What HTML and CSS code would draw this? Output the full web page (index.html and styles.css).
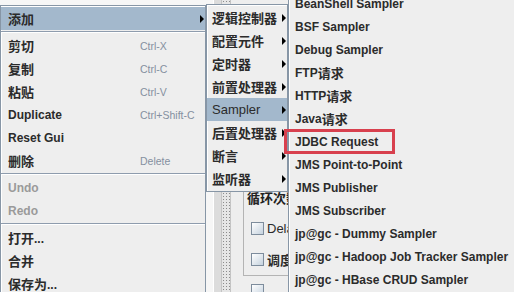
FILE: index.html
```html
<!DOCTYPE html>
<html lang="zh-CN">
<head>
    <meta charset="UTF-8">
    <title>JMeter - 添加 Sampler</title>
    <link rel="stylesheet" href="styles.css">
</head>
<body>
    <div class="window">
        <div class="topbar">
            <div class="tb-grey"></div>
            <div class="tb-white"></div>
            <div class="tb-tool"></div>
        </div>
        <div class="workspace">
            <div class="tree"></div>
            <div class="gutter"></div>
            <div class="splitter"></div>
            <div class="form">
                <div class="group">
                    <div class="group-title cn">循环次数</div>
                    <div class="check"><span class="box"></span>Delay</div>
                    <div class="check"><span class="box"></span><span class="cn">调度器</span></div>
                </div>
                <div class="check lone"><span class="box"></span></div>
            </div>
            <div class="detail"></div>
        </div>
    </div>

    <!-- popup: edit menu -->
    <div class="menu menu-main">
        <div class="item active"><span class="label cn">添加</span><span class="arrow"></span></div>
        <div class="sep"></div>
        <div class="item"><span class="label cn">剪切</span><span class="accel">Ctrl-X</span></div>
        <div class="item"><span class="label cn">复制</span><span class="accel">Ctrl-C</span></div>
        <div class="item"><span class="label cn">粘贴</span><span class="accel">Ctrl-V</span></div>
        <div class="item"><span class="label">Duplicate</span><span class="accel">Ctrl+Shift-C</span></div>
        <div class="item"><span class="label">Reset Gui</span></div>
        <div class="item"><span class="label cn">删除</span><span class="accel">Delete</span></div>
        <div class="sep"></div>
        <div class="item disabled"><span class="label">Undo</span></div>
        <div class="item disabled"><span class="label">Redo</span></div>
        <div class="sep"></div>
        <div class="item"><span class="label"><span class="cn">打开</span>...</span></div>
        <div class="item"><span class="label cn">合并</span></div>
        <div class="item"><span class="label"><span class="cn">保存为</span>...</span></div>
    </div>

    <!-- popup: add submenu -->
    <div class="menu menu-sub">
        <div class="item"><span class="cn">逻辑控制器</span><span class="arrow"></span></div>
        <div class="item"><span class="cn">配置元件</span><span class="arrow"></span></div>
        <div class="item"><span class="cn">定时器</span><span class="arrow"></span></div>
        <div class="item"><span class="cn">前置处理器</span><span class="arrow"></span></div>
        <div class="item active"><span class="plain">Sampler</span><span class="arrow"></span></div>
        <div class="item"><span class="cn">后置处理器</span><span class="arrow"></span></div>
        <div class="item"><span class="cn">断言</span><span class="arrow"></span></div>
        <div class="item"><span class="cn">监听器</span><span class="arrow"></span></div>
    </div>

    <!-- popup: sampler list -->
    <div class="menu menu-sampler">
        <div class="item">BeanShell Sampler</div>
        <div class="item">BSF Sampler</div>
        <div class="item">Debug Sampler</div>
        <div class="item">FTP<span class="cn">请求</span></div>
        <div class="item">HTTP<span class="cn">请求</span></div>
        <div class="item">Java<span class="cn">请求</span></div>
        <div class="item">JDBC Request</div>
        <div class="item">JMS Point-to-Point</div>
        <div class="item">JMS Publisher</div>
        <div class="item">JMS Subscriber</div>
        <div class="item">jp@gc - Dummy Sampler</div>
        <div class="item">jp@gc - Hadoop Job Tracker Sampler</div>
        <div class="item">jp@gc - HBase CRUD Sampler</div>
    </div>

    <div class="callout"></div>
</body>
</html>
```

FILE: styles.css
```css
html, body {
    margin: 0;
    width: 514px;
    height: 292px;
    overflow: hidden;
}
body {
    position: relative;
    font-family: "Liberation Sans", "Noto Sans CJK SC", sans-serif;
    color: #2b2b2b;
    background: #eeeeee;
}
.cn {
    font-family: "Noto Sans CJK SC", sans-serif;
    font-size: 13px;
    font-weight: bold;
}

/* window behind the popups */
.window {
    width: 514px;
    height: 292px;
    display: flex;
    flex-direction: column;
}
.topbar {
    height: 5px;
    display: flex;
}
.tb-grey {
    width: 42px;
    background: #c7cacf;
}
.tb-white {
    width: 164px;
    background: #ffffff;
}
.tb-tool {
    flex: 1;
    background: #dedede;
}
.workspace {
    flex: 1;
    display: flex;
}
.tree {
    width: 213px;
    background: #f6f6f6;
    border-right: 1px solid #ffffff;
}
.gutter {
    width: 7px;
    background: #dcdcdc;
    border-right: 1px solid #c4c4c4;
}
.splitter {
    width: 8px;
    background: radial-gradient(circle, #8c8c8c 0.7px, transparent 1px) 0 0 / 3px 3px, #e6e6e6;
    border-right: 1px solid #c4c4c4;
}
.form {
    flex: 0 0 45px;
    padding-left: 12px;
    overflow: hidden;
}
.detail {
    flex: 1;
}
.group {
    margin-top: 183px;
    border: 1px solid #b4b4b4;
    border-right: none;
    padding: 4px 0 0 3px;
}
.group-title {
    height: 20px;
    line-height: 20px;
    margin-bottom: 5px;
    color: #222;
    white-space: nowrap;
}
.check {
    height: 31px;
    display: flex;
    align-items: center;
    gap: 3px;
    font-size: 13px;
    white-space: nowrap;
    padding-left: 4px;
}
.check.lone {
    padding-left: 8px;
    margin-top: 8px;
    align-items: flex-start;
}
.box {
    width: 11px;
    height: 11px;
    flex: none;
    border: 1px solid #7d8c9c;
    background: linear-gradient(135deg, #ffffff, #c5d2de);
}

/* popup menus */
.menu {
    position: absolute;
    background: #eeeeee;
    border: 1px solid #8796a6;
    box-shadow: inset 1px 1px 0 #ffffff;
    padding: 1px 0;
}
.menu-main {
    left: 0;
    top: 5px;
    width: 204px;
}
.menu-sub {
    left: 206px;
    top: 4px;
    width: 80px;
}
.menu-sampler {
    left: 288px;
    top: -10px;
    width: 240px;
}
.item {
    height: 23px;
    display: flex;
    align-items: center;
    padding-left: 7px;
    font-size: 12px;
    font-weight: bold;
    white-space: nowrap;
}
.menu-sub .item {
    padding-left: 5px;
}
.menu-sampler .item {
    padding-left: 6px;
}
.item.active {
    background: #a3b8cc;
}
.item.disabled {
    color: #9a9a9a;
}
.plain {
    font-size: 13px;
    font-weight: normal;
}
.label {
    flex: 0 0 132px;
}
.accel {
    font-size: 10.5px;
    font-weight: normal;
    color: #8590a0;
}
.arrow {
    margin-left: auto;
    margin-right: 1px;
    width: 0;
    height: 0;
    border-left: 4px solid #000;
    border-top: 4px solid transparent;
    border-bottom: 4px solid transparent;
}
.sep {
    height: 0;
    margin: 1px 0;
    border-top: 1px solid #8e9cad;
    border-bottom: 1px solid #ffffff;
}

/* red annotation around JDBC Request */
.callout {
    position: absolute;
    left: 284px;
    top: 129px;
    width: 111px;
    height: 25px;
    box-sizing: border-box;
    border: 3px solid #d8404e;
}
```
